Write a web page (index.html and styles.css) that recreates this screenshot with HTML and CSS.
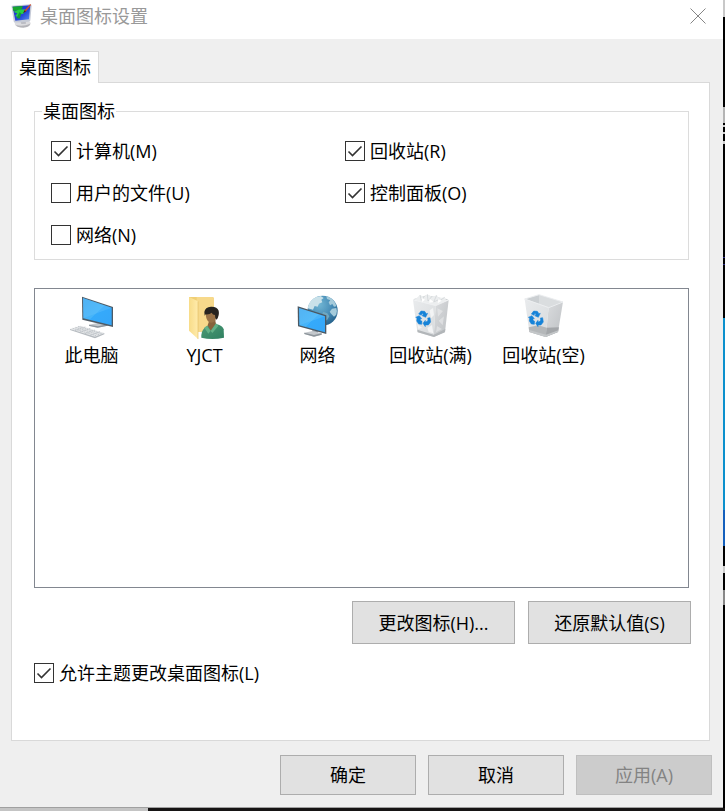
FILE: index.html
```html
<!DOCTYPE html>
<html lang="zh-CN">
<head>
<meta charset="utf-8">
<meta name="viewport" content="width=device-width, initial-scale=1">
<title>桌面图标设置</title>
<link rel="stylesheet" href="styles.css">
</head>
<body>
<main class="dialog">
  <header class="titlebar">
    <svg class="title-icon" viewBox="30 6 72 84" aria-hidden="true">
      <defs>
        <linearGradient id="desk" x1="0" y1="0" x2="1" y2="1"><stop offset="0" stop-color="#1c2bc4"/><stop offset=".6" stop-color="#2548d8"/><stop offset="1" stop-color="#5c8ff0"/></linearGradient>
      </defs>
      <path d="M44 72q0-6 14-6l22-2q12 0 12 6 0 10-22 12-24 0-26-10z" fill="#dcdcdf"/>
      <path d="M48 75q20 6 43-4-2 10-21 12-19 0-22-8z" fill="#b4b4b9"/>
      <path d="M60 58l16-1 2 14-14 1z" fill="#b9bbc2"/>
      <path d="M36 17l54-4q5 0 5 4l-4 44q0 4-4 4l-42 3q-4 0-4-4l-6-43q-1-4 1-4z" fill="#c5cad6"/>
      <path d="M38 20l53-4-4 42-41 4z" fill="url(#desk)"/>
      <path d="M38 20l30-2q0 12-12 13l-16 2z" fill="#17a62e"/>
      <path d="M41 36l14-7 20-1-5 13-11 2-4 9-9-4 6-8z" fill="#27cf45"/>
      <path d="M50 54l8-17 6 3-5 16z" fill="#159b38"/>
      <path d="M91 12l-17 19-3 7 7-4 15-19z" fill="#d64a24"/>
      <path d="M74 31l-5 9 9-6z" fill="#33291f"/>
    </svg>
    <h1 class="title">桌面图标设置</h1>
    <button class="close" type="button" aria-label="关闭">
      <svg viewBox="0 0 16 16" aria-hidden="true"><path d="M.5.5l15 15M15.5.5l-15 15" stroke="#858585" fill="none"/></svg>
    </button>
  </header>

  <div class="content">
    <div class="tabs" role="tablist">
      <button class="tab" type="button" role="tab" aria-selected="true" aria-controls="panel" id="tab">桌面图标</button>
    </div>
    <section class="panel" id="panel" role="tabpanel" aria-labelledby="tab">
      <fieldset class="group">
        <legend>桌面图标</legend>
        <div class="options">
          <label class="check"><input type="checkbox" checked>计算机(M)</label>
          <label class="check"><input type="checkbox" checked>回收站(R)</label>
          <label class="check"><input type="checkbox">用户的文件(U)</label>
          <label class="check"><input type="checkbox" checked>控制面板(O)</label>
          <label class="check"><input type="checkbox">网络(N)</label>
        </div>
      </fieldset>

      <ul class="icons">
        <li class="icon">
          <svg viewBox="54 24 144 144" aria-hidden="true">
            <defs>
              <linearGradient id="screen" x1="0" y1="0" x2="1" y2="1"><stop offset="0" stop-color="#42a9f0"/><stop offset=".5" stop-color="#46b5fa"/><stop offset=".52" stop-color="#35aafb"/><stop offset="1" stop-color="#35a6f8"/></linearGradient>
            </defs>
            <path d="M142 108l18 4 0 10-18-2z" fill="#a2a9b0"/>
            <path d="M117 119l26-5 30 4-1 4-29 6-26-5z" fill="#c3c8cd"/>
            <path d="M117 119l27 5 29-6v4l-30 6-26-6z" fill="#8d959d"/>
            <path d="M96 35l93 31v60l-92-22z" fill="#4e5b66"/>
            <path d="M99 39l86 29v53l-85-21z" fill="url(#screen)"/>
            <path d="M99 39l86 29-85 32z" fill="#72c8fb" opacity=".3"/>
            <path d="M60 132l31-10 72 22-28 14z" fill="#e3e5e7"/>
            <path d="M60 132l75 23 28-11v4l-28 12-75-25z" fill="#b5babf"/>
            <path d="M68 130l70 22M76 127l71 22M84 124l71 22M75 137l31-11M90 141l31-11M105 146l30-11M120 151l30-11" stroke="#b4babf" stroke-width="2" stroke-dasharray="5 2" fill="none"/>
          </svg>
          <span>此电脑</span>
        </li>
        <li class="icon">
          <svg viewBox="393 24 144 144" aria-hidden="true">
            <defs>
              <linearGradient id="folder"><stop offset="0" stop-color="#f8dc88"/><stop offset="1" stop-color="#ffebac"/></linearGradient>
              <linearGradient id="coat" x2="1" y2="1"><stop offset="0" stop-color="#4d9b75"/><stop offset="1" stop-color="#2f8061"/></linearGradient>
            </defs>
            <path d="M417 36h69q6 0 6 6v99h-50l-25-6z" fill="#f0cf75"/>
            <path d="M440 36h46q6 0 6 6v99h-50z" fill="#f7d98b"/>
            <path d="M417 36l27 13v113l-27-25z" fill="url(#folder)"/>
            <path d="M444 49v113" stroke="#e3c063" stroke-width="2"/>
            <path d="M454 158q-1-20 10-30l16-9 19-2q20 6 22 16l1 25q-36 8-68 0z" fill="url(#coat)"/>
            <path d="M473 121l9 16 16-20-3-14h-16z" fill="#87633c"/>
            <path d="M470 122l12 15-7 9-12-18zM498 115l7 8-18 21-5-6z" fill="#63b187"/>
            <path d="M467 85q0-13 15-14 17 0 18 17l-4 19q-8 9-18 5-10-5-11-27z" fill="#997247"/>
            <path d="M463 81q2-15 20-16 18-1 23 12 3 14-6 27l-4-4-1-10q-7 0-10-7-6 6-18 5l-3 4z" fill="#26231f"/>
          </svg>
          <span>YJCT</span>
        </li>
        <li class="icon">
          <svg viewBox="42 24 144 144" aria-hidden="true">
            <defs>
              <radialGradient id="globe" cx=".4" cy=".3" r=".75"><stop offset="0" stop-color="#70b5d3"/><stop offset=".6" stop-color="#4489b4"/><stop offset="1" stop-color="#235e87"/></radialGradient>
            </defs>
            <circle cx="128" cy="77" r="45" fill="url(#globe)"/>
            <path d="M83 70q4-23 24-33l15-4 9 6-7 5 3 8-10 4-4 9-9-2-5 11-8-2z" fill="#c9e1e9"/>
            <path d="M139 34q18 5 27 21l3 9-7 1-5-8-7 4-4-9 5-6-10-4zM156 71l13-2q4 10 0 20l-7 6-8-8-5-7z" fill="#a5cbdb"/>
            <path d="M129 80l13 5 6 9-6 10-8 4-8-13z" fill="#6fa8c2"/>
            <path d="M97 135l17 4v9H97z" fill="#969da3"/>
            <path d="M73 143l25-5 27 7v4l-23 6-29-8z" fill="#c4c8cc"/>
            <path d="M73 143l29 7 23-5v4l-23 6-29-8z" fill="#8d959b"/>
            <path d="M53 64l86 27v56l-85-23z" fill="#4b5863"/>
            <path d="M57 69l78 25v48l-77-21z" fill="url(#screen)"/>
            <path d="M57 69l78 25-77 27z" fill="#86d1fb" opacity=".24"/>
          </svg>
          <span>网络</span>
        </li>
        <li class="icon">
          <svg viewBox="381 24 144 144" aria-hidden="true">
            <defs>
              <linearGradient id="bin-left" x2="1" y2="1"><stop offset="0" stop-color="#e9ebed"/><stop offset="1" stop-color="#d8dbdd"/></linearGradient>
              <linearGradient id="bin-right" x2="1" y2="1"><stop offset="0" stop-color="#dbdddf"/><stop offset="1" stop-color="#bdc0c3"/></linearGradient>
              <g id="recycle" fill="#1683d8" stroke="#1683d8" stroke-width="1.5" stroke-linejoin="round">
                <path d="M-15-13l7-9 11 1 5 7 4-1-6 12-11-5 4-2-3-5-3 6z"/>
                <path d="M12-1l7-1 2 13-7 9-9 0 0 5-7-10 7-9 0 5 6-2 2-4z"/>
                <path d="M-6 18l-9-1-6-9 1-9-4-2 11-5 7 9-4 0 0 5 5 3z"/>
              </g>
            </defs>
            <path d="M399 43l41-12 65 12-38 20z" fill="#cfd3d5"/>
            <path d="M404 44l16-14 12 6 10-8 13 7 15-4 7 9 17-3 5 10-32 18z" fill="#eceeef"/>
            <path d="M420 30l4 16 8-10M442 28l2 20 11-13M470 31l-9 20 17-8M481 46l13-9" stroke="#ccd0d3" stroke-width="2" fill="none"/>
            <path d="M425 38l10 6-9 8zM449 41l12 10-13 2zM475 42l10 5-12 8z" fill="#fff"/>
            <path d="M399 44l68 18-6 94-49-15z" fill="url(#bin-left)"/>
            <path d="M467 62l39-17-11 95-34 16z" fill="url(#bin-right)"/>
            <path d="M412 134l49 15 35-17-1 10-33 14-49-14z" fill="#b2b6b9"/>
            <path d="M449 76l10-7 3 21-9 10zM412 118l14 10-11 4zM442 129l14-9 4 25-14-4z" fill="#f3f4f5"/>
            <path d="M472 70l17 8-15 17zM492 94l-16 13 12 14zM471 123l15 9-18 10z" fill="#eff0f1" opacity=".5"/>
            <path d="M399 44l68 18 39-17" fill="none" stroke="#f2f3f4" stroke-width="2"/>
            <use href="#recycle" x="431" y="100"/>
          </svg>
          <span>回收站(满)</span>
        </li>
        <li class="icon">
          <svg viewBox="150 24 144 144" aria-hidden="true">
            <path d="M164 42l43-13 72 22-43 17z" fill="#d3d7da"/>
            <path d="M207 30v29l29 8 42-17z" fill="#dadddf"/>
            <path d="M169 42l38-11v27z" fill="#cbcfd2"/>
            <path d="M164 42l72 24-9 90-49-15z" fill="url(#bin-left)"/>
            <path d="M236 67l43-17-15 91-37 15z" fill="url(#bin-right)"/>
            <path d="M176 127l29-6 25 7-3 28-49-15z" fill="#b4b7b9"/>
            <path d="M230 128l37-1-3 14-37 15z" fill="#a3a6a9"/>
            <path d="M178 135l50 14 37-13-1 5-37 15-49-15z" fill="#c4c7c9"/>
            <path d="M164 42l43-13 72 22-43 17z" fill="none" stroke="#eceef0" stroke-width="3"/>
            <use href="#recycle" x="199" y="100"/>
          </svg>
          <span>回收站(空)</span>
        </li>
      </ul>

      <div class="panel-actions">
        <button class="button" type="button">更改图标(H)...</button>
        <button class="button" type="button">还原默认值(S)</button>
      </div>
      <label class="check theme"><input type="checkbox" checked>允许主题更改桌面图标(L)</label>
    </section>
  </div>

  <footer class="footer">
    <button class="button" type="button">确定</button>
    <button class="button" type="button">取消</button>
    <button class="button" type="button" disabled>应用(A)</button>
  </footer>
</main>
</body>
</html>
```

FILE: styles.css
```css
* {
  box-sizing: border-box;
}

/* The desktop shows as a thin strip to the right of and below the dialog. */
body {
  margin: 0;
  min-height: 100vh;
  display: flex;
  padding: 0 2px 3px 0;
  font: 18px/24px "Open Sans", "Noto Sans CJK SC", sans-serif;
  color: #000;
  background:
    linear-gradient(to right, #c4c4c4 148px, #161414 148px) bottom / 100% 3px no-repeat,
    linear-gradient(#c8c8c8 17px, #000 17px 107px, #b5b5b5 107px 123px,
      #000 123px 125px, #ccc 125px 127px, #000 127px 132px, #ccc 132px 134px,
      #000 134px 141px, #ccc 141px 144px, #000 144px 257px, #2b2b86 257px 258px,
      #000 258px 264px, #2b2b86 264px 265px, #000 265px 318px,
      #0b90cd 318px 510px, #1460bd 510px 546px, #000 546px 566px,
      #ccc 566px 573px, #000 573px 590px, #888 590px 605px, #000 605px);
}

button,
input {
  font: inherit;
  color: inherit;
  margin: 0;
}

.dialog {
  flex: 1;
  display: flex;
  flex-direction: column;
  background: #efefef;
  border-bottom: 1px solid #a0a0a0;
}

.titlebar {
  display: flex;
  align-items: center;
  height: 39px;
  padding: 0 17px 7px 10px;
  background: #fff;
}

.title-icon {
  width: 24px;
  height: 28px;
}

.title {
  flex: 1;
  margin: 0 0 0 6px;
  font-size: 18px;
  font-weight: 400;
  color: #999;
}

.close {
  display: flex;
  padding: 0;
  border: 0;
  background: none;
}

.close svg {
  width: 16px;
  height: 16px;
}

.content {
  flex: 1;
  display: flex;
  flex-direction: column;
  padding: 12px 13px 0 11px;
}

.tabs {
  display: flex;
}

.tab {
  position: relative;
  height: 32px;
  margin-bottom: -1px;
  padding: 0 7px 2px;
  border: 1px solid #d9d9d9;
  border-bottom: 0;
  background: #fff;
}

.panel {
  flex: 1;
  display: flex;
  flex-direction: column;
  padding: 16px 20px 55px 22px;
  border: 1px solid #d9d9d9;
  background: #fff;
}

.group {
  min-width: 0;
  margin: 0;
  padding: 0 16px 12px;
  border: 1px solid #dcdcdc;
}

.group legend {
  margin-left: -9px;
  padding: 0 1px;
}

.options {
  display: grid;
  grid-template-columns: 294px 1fr;
  row-gap: 18px;
  padding-top: 16px;
}

.check {
  display: flex;
  align-items: center;
  gap: 5px;
}

.check input {
  appearance: none;
  flex: none;
  width: 20px;
  height: 20px;
  border: 1px solid #333;
  background: #fff;
}

.check input:checked {
  background: #fff url("data:image/svg+xml,%3Csvg xmlns='http://www.w3.org/2000/svg' viewBox='0 0 18 18'%3E%3Cpath d='M2.5 9.5l4 4 9-9' fill='none' stroke='%23333' stroke-width='1.6'/%3E%3C/svg%3E") center / 18px;
}

.icons {
  flex: 1;
  display: flex;
  flex-wrap: wrap;
  align-content: flex-start;
  margin: 28px 0 0;
  padding: 4px 0;
  list-style: none;
  border: 1px solid #828790;
}

.icon {
  width: 113px;
  display: flex;
  flex-direction: column;
  align-items: center;
  gap: 2px;
}

.icon svg {
  width: 48px;
  height: 48px;
}

.panel-actions,
.footer {
  display: flex;
  justify-content: flex-end;
  gap: 13px;
}

.panel-actions {
  margin: 13px -2px 0 0;
}

.button {
  width: 136px;
  height: 40px;
  padding: 0;
  border: 1px solid #adadad;
  background: #e1e1e1;
}

.panel-actions .button {
  width: 163px;
  height: 43px;
}

.button:disabled {
  color: #838383;
  border-color: #bfbfbf;
  background: #ccc;
}

.theme {
  margin-top: 17px;
}

.footer {
  gap: 12px;
  padding: 14px 11px 12px;
}
```
